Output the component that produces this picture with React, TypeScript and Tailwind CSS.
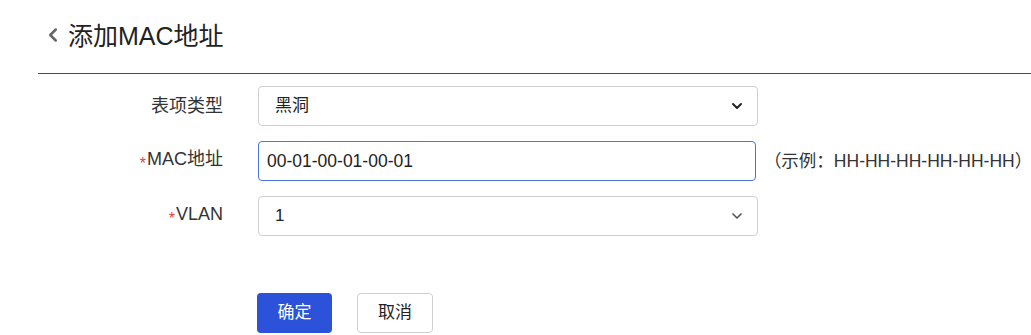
import { ChevronLeft, ChevronDown } from 'lucide-react';

const font = { fontFamily: '"Liberation Sans", "Noto Sans CJK SC", sans-serif' };

function Label({ text, required }: { text: string; required?: boolean }) {
  return (
    <div className="w-[224px] shrink-0 pr-px text-right text-[18px] text-[#333]">
      {required && <span className="mr-px align-[-4px] text-[16px] text-[#e0473f]">*</span>}
      {text}
    </div>
  );
}

function SelectBox({ value, strong }: { value: string; strong?: boolean }) {
  return (
    <div className="flex h-10 w-[500px] items-center justify-between rounded border border-[#cfcfcf] bg-white pl-4 pr-3">
      <span className="text-[17px] text-[#222]">{value}</span>
      {strong ? (
        <ChevronDown className="h-4 w-4 text-[#222]" strokeWidth={3} />
      ) : (
        <ChevronDown className="h-4 w-4 text-[#555]" strokeWidth={2.5} />
      )}
    </div>
  );
}

export default function App() {
  return (
    <div className="h-[335px] w-[1031px] overflow-hidden bg-white" style={font}>
      <div className="flex h-[73px] items-start pl-[42px] pt-[20px]">
        <ChevronLeft className="mt-[4px] h-[22px] w-[22px] text-[#666]" strokeWidth={2.75} />
        <h1 className="ml-[4px] text-[25px] leading-[32px] text-[#222]">添加MAC地址</h1>
      </div>
      <div className="ml-[38px] h-px bg-[#1f4fb5]" />

      <div className="mt-3 flex flex-col gap-[15px]">
        <div className="flex items-center gap-[34px]">
          <Label text="表项类型" />
          <SelectBox value="黑洞" strong />
        </div>
        <div className="flex items-center gap-[34px]">
          <Label text="MAC地址" required />
          <div className="flex h-10 w-[500px] items-center rounded border border-[#4c74e0] bg-white px-[8px] text-[17.5px] text-[#222]">
            00-01-00-01-00-01
          </div>
          <span className="ml-[-26px] text-[17.5px] text-[#333]">（示例：HH-HH-HH-HH-HH-HH）</span>
        </div>
        <div className="flex items-center gap-[34px]">
          <Label text="VLAN" required />
          <SelectBox value="1" />
        </div>
      </div>

      <div className="ml-[257px] mt-[57px] flex gap-[25px]">
        <button className="h-10 w-[75px] rounded bg-[#2b52d8] text-[17px] text-white">确定</button>
        <button className="h-10 w-[76px] rounded border border-[#cfcfcf] bg-white text-[17px] text-[#222]">取消</button>
      </div>
    </div>
  );
}
